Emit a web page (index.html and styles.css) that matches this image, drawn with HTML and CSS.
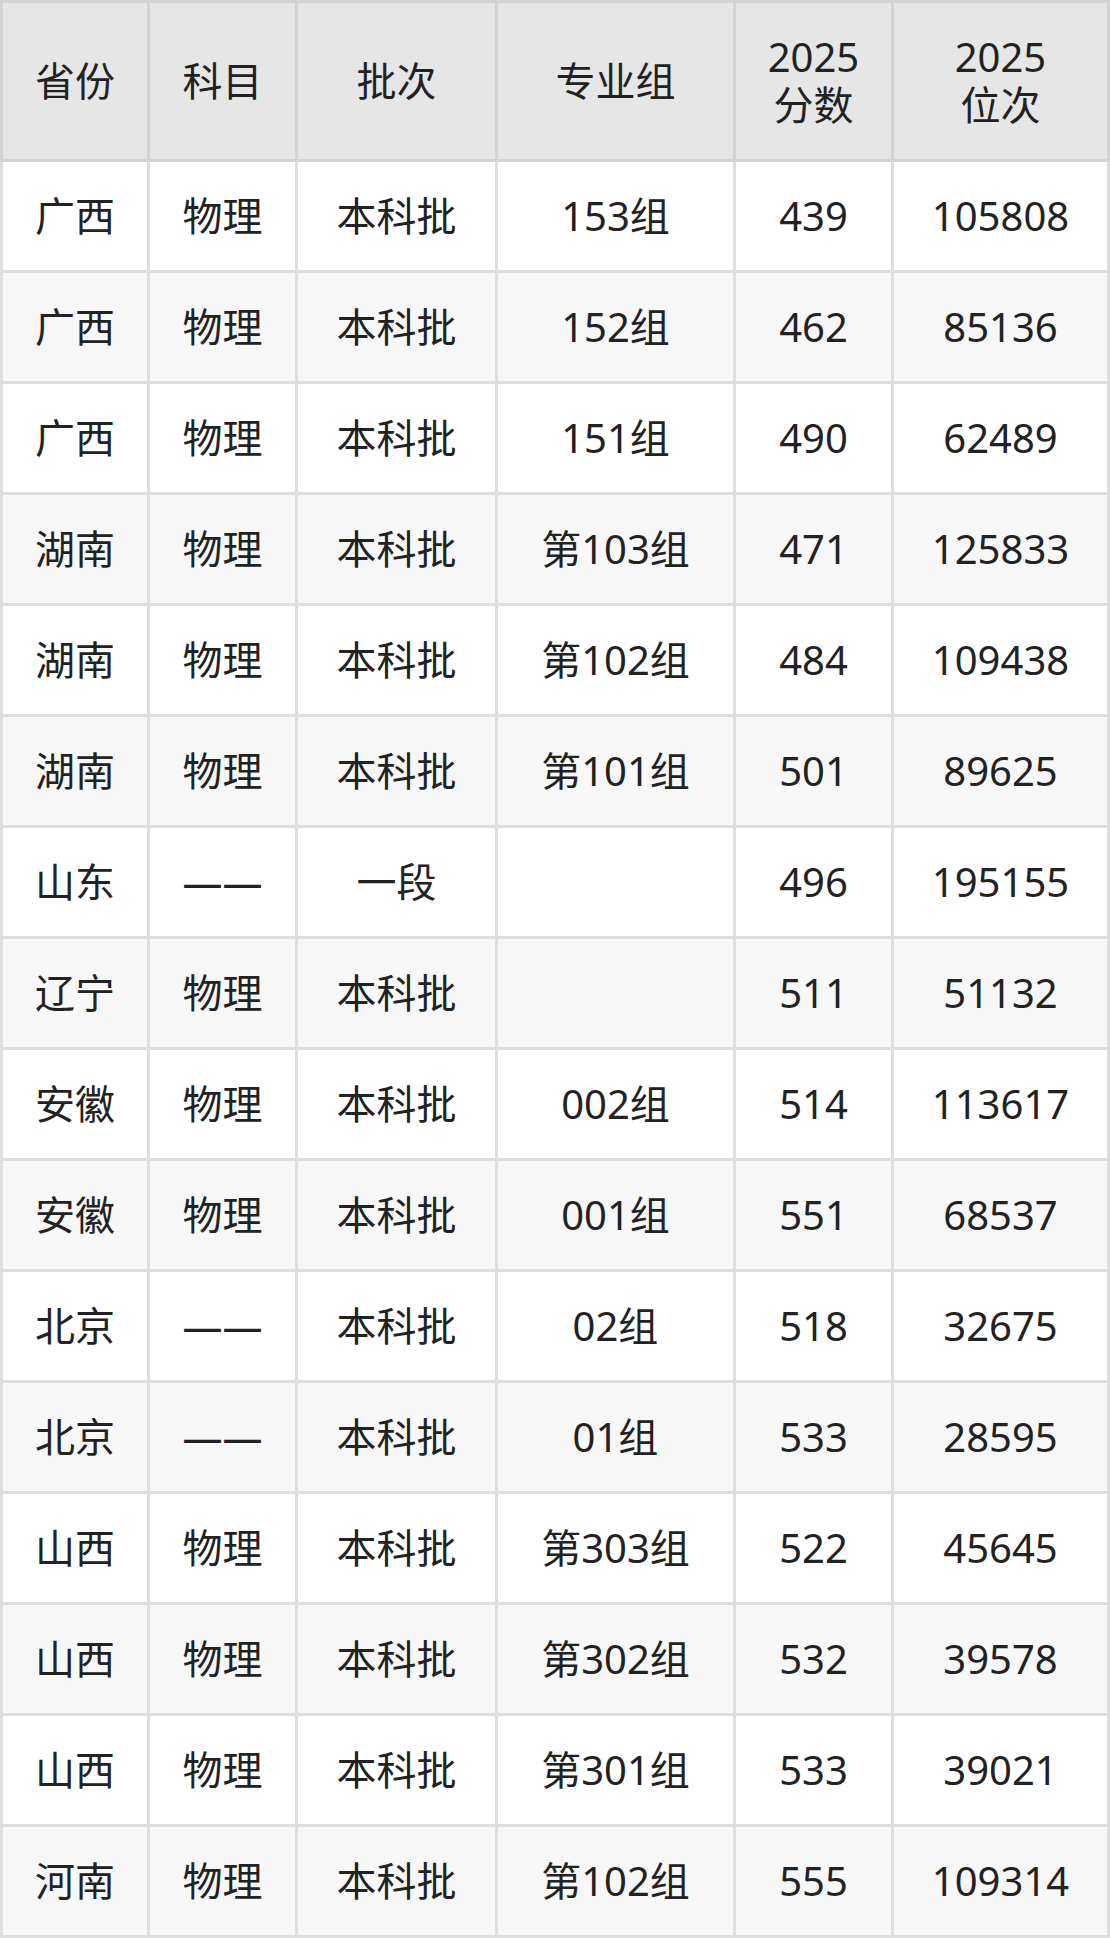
FILE: index.html
```html
<!DOCTYPE html>
<html lang="zh-CN">
<head>
<meta charset="utf-8">
<title>2025 分数位次</title>
<link rel="stylesheet" href="styles.css">
</head>
<body>
<div class="table">
  <div class="grid head">
    <div class="cell">省份</div>
    <div class="cell">科目</div>
    <div class="cell">批次</div>
    <div class="cell">专业组</div>
    <div class="cell">2025<br>分数</div>
    <div class="cell">2025<br>位次</div>
  </div>
  <div class="grid body">
    <div class="cell">广西</div><div class="cell">物理</div><div class="cell">本科批</div><div class="cell">153组</div><div class="cell">439</div><div class="cell">105808</div>
    <div class="cell alt">广西</div><div class="cell alt">物理</div><div class="cell alt">本科批</div><div class="cell alt">152组</div><div class="cell alt">462</div><div class="cell alt">85136</div>
    <div class="cell">广西</div><div class="cell">物理</div><div class="cell">本科批</div><div class="cell">151组</div><div class="cell">490</div><div class="cell">62489</div>
    <div class="cell alt">湖南</div><div class="cell alt">物理</div><div class="cell alt">本科批</div><div class="cell alt">第103组</div><div class="cell alt">471</div><div class="cell alt">125833</div>
    <div class="cell">湖南</div><div class="cell">物理</div><div class="cell">本科批</div><div class="cell">第102组</div><div class="cell">484</div><div class="cell">109438</div>
    <div class="cell alt">湖南</div><div class="cell alt">物理</div><div class="cell alt">本科批</div><div class="cell alt">第101组</div><div class="cell alt">501</div><div class="cell alt">89625</div>
    <div class="cell">山东</div><div class="cell">——</div><div class="cell">一段</div><div class="cell"></div><div class="cell">496</div><div class="cell">195155</div>
    <div class="cell alt">辽宁</div><div class="cell alt">物理</div><div class="cell alt">本科批</div><div class="cell alt"></div><div class="cell alt">511</div><div class="cell alt">51132</div>
    <div class="cell">安徽</div><div class="cell">物理</div><div class="cell">本科批</div><div class="cell">002组</div><div class="cell">514</div><div class="cell">113617</div>
    <div class="cell alt">安徽</div><div class="cell alt">物理</div><div class="cell alt">本科批</div><div class="cell alt">001组</div><div class="cell alt">551</div><div class="cell alt">68537</div>
    <div class="cell">北京</div><div class="cell">——</div><div class="cell">本科批</div><div class="cell">02组</div><div class="cell">518</div><div class="cell">32675</div>
    <div class="cell alt">北京</div><div class="cell alt">——</div><div class="cell alt">本科批</div><div class="cell alt">01组</div><div class="cell alt">533</div><div class="cell alt">28595</div>
    <div class="cell">山西</div><div class="cell">物理</div><div class="cell">本科批</div><div class="cell">第303组</div><div class="cell">522</div><div class="cell">45645</div>
    <div class="cell alt">山西</div><div class="cell alt">物理</div><div class="cell alt">本科批</div><div class="cell alt">第302组</div><div class="cell alt">532</div><div class="cell alt">39578</div>
    <div class="cell">山西</div><div class="cell">物理</div><div class="cell">本科批</div><div class="cell">第301组</div><div class="cell">533</div><div class="cell">39021</div>
    <div class="cell alt">河南</div><div class="cell alt">物理</div><div class="cell alt">本科批</div><div class="cell alt">第102组</div><div class="cell alt">555</div><div class="cell alt">109314</div>
  </div>
</div>
</body>
</html>
```

FILE: styles.css
```css
html, body {
  margin: 0;
  padding: 0;
  background: #ffffff;
}

.table {
  width: 1110px;
  font-family: "Noto Sans", "Noto Sans CJK SC", sans-serif;
  font-size: 40px;
  color: #222222;
}

.grid {
  display: grid;
  grid-template-columns: 144px 145px 197px 235px 155px 213px;
  column-gap: 3px;
  row-gap: 3px;
}

.head {
  background: #d3d3d3;
  padding: 3px 3px 3px 3px;
  grid-auto-rows: 156px;
}

.body {
  background: #dedede;
  padding: 0 3px 3px 3px;
  grid-auto-rows: 108px;
}

.cell {
  display: flex;
  align-items: center;
  justify-content: center;
  text-align: center;
  background: #ffffff;
  line-height: 48px;
  white-space: nowrap;
}

.head .cell {
  background: #e6e6e6;
}

.cell.alt {
  background: #f7f7f7;
}
```
